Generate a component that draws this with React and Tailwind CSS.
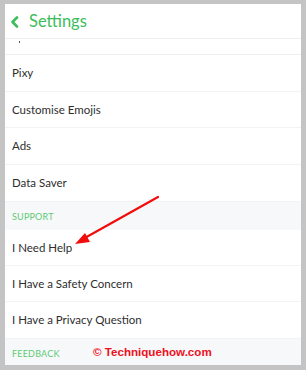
import React from "react";

const Row = ({ label, h }) => (
  <div className={`flex items-center border-b border-[#f2f3f5] pl-[7px] ${h}`}>
    <span className="text-[11.5px] text-[#2e2e2e] leading-none">{label}</span>
  </div>
);

export default function App() {
  return (
    <div className="w-[306px] h-[370px] bg-[#c4c4c4] pt-[4px] pl-[5px] pr-[5px] pb-[5px] font-['Lato','Open_Sans',sans-serif]">
      <div className="relative w-[296px] h-[361px] bg-white overflow-hidden">
        <div className="flex items-center h-[35px] border-b border-[#eeeff1] pl-[5px]">
          <svg width="10" height="12" viewBox="0 0 10 12" className="mr-[9px] mt-[1px]">
            <path d="M7 1.5 L2.5 6 L7 10.5" fill="none" stroke="#3cbd5b" strokeWidth="2.6" strokeLinecap="round" strokeLinejoin="round" />
          </svg>
          <span className="text-[16.5px] text-[#3cbd5b] leading-none">Settings</span>
        </div>
        <div className="h-[14px] border-b border-[#eeeff1] pl-[14px]">
          <div className="w-[1px] h-[2px] bg-[#555] mt-[2px]" />
        </div>
        <Row label="Pixy" h="h-[37px]" />
        <Row label="Customise Emojis" h="h-[36px]" />
        <Row label="Ads" h="h-[37px]" />
        <Row label="Data Saver" h="h-[37px]" />
        <div className="flex items-center h-[28px] bg-[#f7f8fa] pl-[7px]">
          <span className="text-[9px] text-[#5ccb75] leading-none tracking-[0.2px]">SUPPORT</span>
        </div>
        <Row label="I Need Help" h="h-[36px]" />
        <Row label="I Have a Safety Concern" h="h-[36px]" />
        <Row label="I Have a Privacy Question" h="h-[37px]" />
        <div className="flex items-center h-[28px] bg-[#f7f8fa] pl-[7px]">
          <span className="text-[9px] text-[#5ccb75] leading-none tracking-[0.2px]">FEEDBACK</span>
        </div>
        <svg className="absolute left-0 top-0" width="296" height="361" viewBox="0 0 296 361">
          <line x1="153" y1="193" x2="78" y2="235" stroke="#f20d0d" strokeWidth="2.2" strokeLinecap="round" />
          <polygon points="70,240 80,229 85,238" fill="#f20d0d" />
        </svg>
        <span className="absolute left-[88px] top-[342px] text-[11.6px] font-bold text-[#f0101e] leading-none font-['Liberation_Sans',sans-serif]">© Techniquehow.com</span>
      </div>
    </div>
  );
}
